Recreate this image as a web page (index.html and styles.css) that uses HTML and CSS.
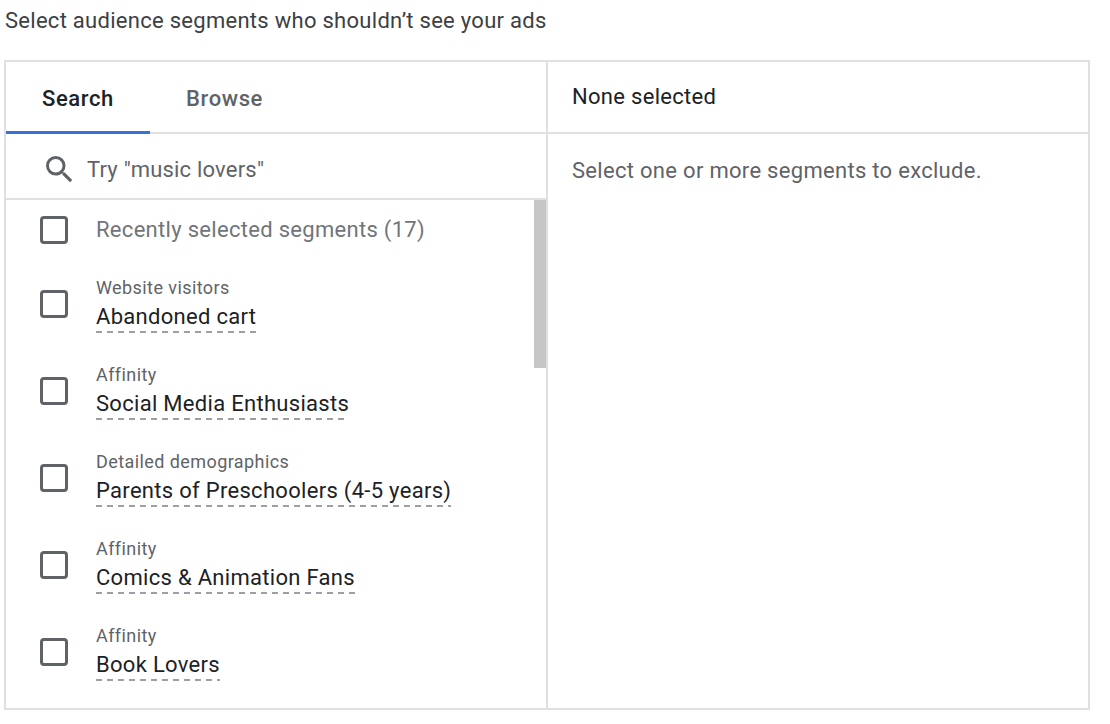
FILE: index.html
```html
<!DOCTYPE html>
<html lang="en">
<head>
  <meta charset="UTF-8">
  <meta name="viewport" content="width=device-width, initial-scale=1.0">
  <title>Audience segments</title>
  <link rel="stylesheet" href="styles.css">
</head>
<body>
  <p class="intro">Select audience segments who shouldn’t see your ads</p>
  <section class="picker">
    <div class="pane pane-left">
      <div class="tabs">
        <div class="tab active">Search</div>
        <div class="tab tab-browse">Browse</div>
      </div>
      <div class="search">
        <svg class="search-icon" viewBox="3 3 18 18" width="27" height="27">
          <path fill="#5f6368" d="M15.5 14h-.79l-.28-.27A6.47 6.47 0 0 0 16 9.5 6.5 6.5 0 1 0 9.5 16c1.61 0 3.09-.59 4.23-1.57l.27.28v.79l5 4.99L20.49 19l-4.99-5zm-6 0C7.01 14 5 11.99 5 9.5S7.01 5 9.5 5 14 7.01 14 9.5 11.99 14 9.5 14z"/>
        </svg>
        <span class="placeholder">Try "music lovers"</span>
      </div>
      <div class="list">
        <div class="thumb"></div>
        <div class="row row-first">
          <span class="checkbox"></span>
          <span class="recent">Recently selected segments (17)</span>
        </div>
        <div class="row">
          <span class="checkbox"></span>
          <div class="segment">
            <div class="category">Website visitors</div>
            <div class="name">Abandoned cart</div>
          </div>
        </div>
        <div class="row">
          <span class="checkbox"></span>
          <div class="segment">
            <div class="category">Affinity</div>
            <div class="name">Social Media Enthusiasts</div>
          </div>
        </div>
        <div class="row">
          <span class="checkbox"></span>
          <div class="segment">
            <div class="category">Detailed demographics</div>
            <div class="name">Parents of Preschoolers (4-5 years)</div>
          </div>
        </div>
        <div class="row">
          <span class="checkbox"></span>
          <div class="segment">
            <div class="category">Affinity</div>
            <div class="name">Comics &amp; Animation Fans</div>
          </div>
        </div>
        <div class="row">
          <span class="checkbox"></span>
          <div class="segment">
            <div class="category">Affinity</div>
            <div class="name">Book Lovers</div>
          </div>
        </div>
      </div>
    </div>
    <div class="pane pane-right">
      <div class="selected-head">None selected</div>
      <div class="selected-body">Select one or more segments to exclude.</div>
    </div>
  </section>
</body>
</html>
```

FILE: styles.css
```css
body {
  font-family: Roboto, "Liberation Sans", sans-serif;
  margin: 0;
  padding: 0;
  background-color: #fff;
  color: #202124;
}

.intro {
  margin: 0;
  padding: 9px 0 0 5px;
  height: 60px;
  box-sizing: border-box;
  font-size: 22px;
  line-height: 24px;
  letter-spacing: 0.28px;
  color: #3c4043;
}

.picker {
  display: flex;
  width: 1082px;
  height: 646px;
  margin-left: 4px;
  border: 2px solid #e0e0e0;
}

.pane {
  width: 540px;
  display: flex;
  flex-direction: column;
}

.pane-left {
  border-right: 2px solid #e0e0e0;
}

.tabs {
  display: flex;
  height: 72px;
  box-sizing: border-box;
  border-bottom: 2px solid #e0e0e0;
}

.tab {
  width: 144px;
  height: 72px;
  box-sizing: border-box;
  text-align: center;
  font-size: 22px;
  font-weight: 500;
  line-height: 74px;
  letter-spacing: 0.6px;
  color: #5f6368;
}

.tab-browse {
  width: 149px;
}

.tab.active {
  color: #202124;
  border-bottom: 3px solid #3b6fdb;
}

.search {
  display: flex;
  align-items: center;
  height: 66px;
  box-sizing: border-box;
  padding: 6px 0 0 40px;
  border-bottom: 2px solid #e0e0e0;
}

.placeholder {
  margin-left: 14px;
  font-size: 22px;
  letter-spacing: 0.2px;
  color: #5f6368;
}

.list {
  position: relative;
  flex: 1;
  overflow: hidden;
  padding-left: 34px;
}

.thumb {
  position: absolute;
  top: 0;
  right: 0;
  width: 12px;
  height: 168px;
  background-color: #c6c6c6;
}

.row {
  display: flex;
  align-items: flex-start;
  height: 87px;
}

.row-first {
  height: 70px;
  padding-top: 16px;
  box-sizing: border-box;
}

.row-first .checkbox {
  margin-top: 0;
}

.checkbox {
  flex: none;
  width: 28px;
  height: 28px;
  margin-top: 20px;
  box-sizing: border-box;
  border: 3px solid #5f6368;
  border-radius: 4px;
}

.recent {
  margin-left: 28px;
  font-size: 22px;
  line-height: 28px;
  letter-spacing: 0.3px;
  color: #70757a;
}

.segment {
  margin-left: 28px;
  padding-top: 7px;
}

.category {
  font-size: 18px;
  line-height: 22px;
  letter-spacing: 0.42px;
  color: #5f6368;
}

.name {
  display: inline-block;
  margin-top: 4px;
  padding-bottom: 2px;
  font-size: 22px;
  line-height: 28px;
  letter-spacing: 0.3px;
  color: #202124;
  background: linear-gradient(to right, #9aa0a6 6px, transparent 6px) left bottom / 11px 2px repeat-x;
}

.selected-head {
  height: 72px;
  box-sizing: border-box;
  padding: 21px 0 0 24px;
  border-bottom: 2px solid #e0e0e0;
  font-size: 22px;
  line-height: 28px;
  letter-spacing: 0.3px;
}

.selected-body {
  padding: 23px 0 0 24px;
  font-size: 22px;
  line-height: 28px;
  letter-spacing: 0.3px;
  color: #5f6368;
}
```
